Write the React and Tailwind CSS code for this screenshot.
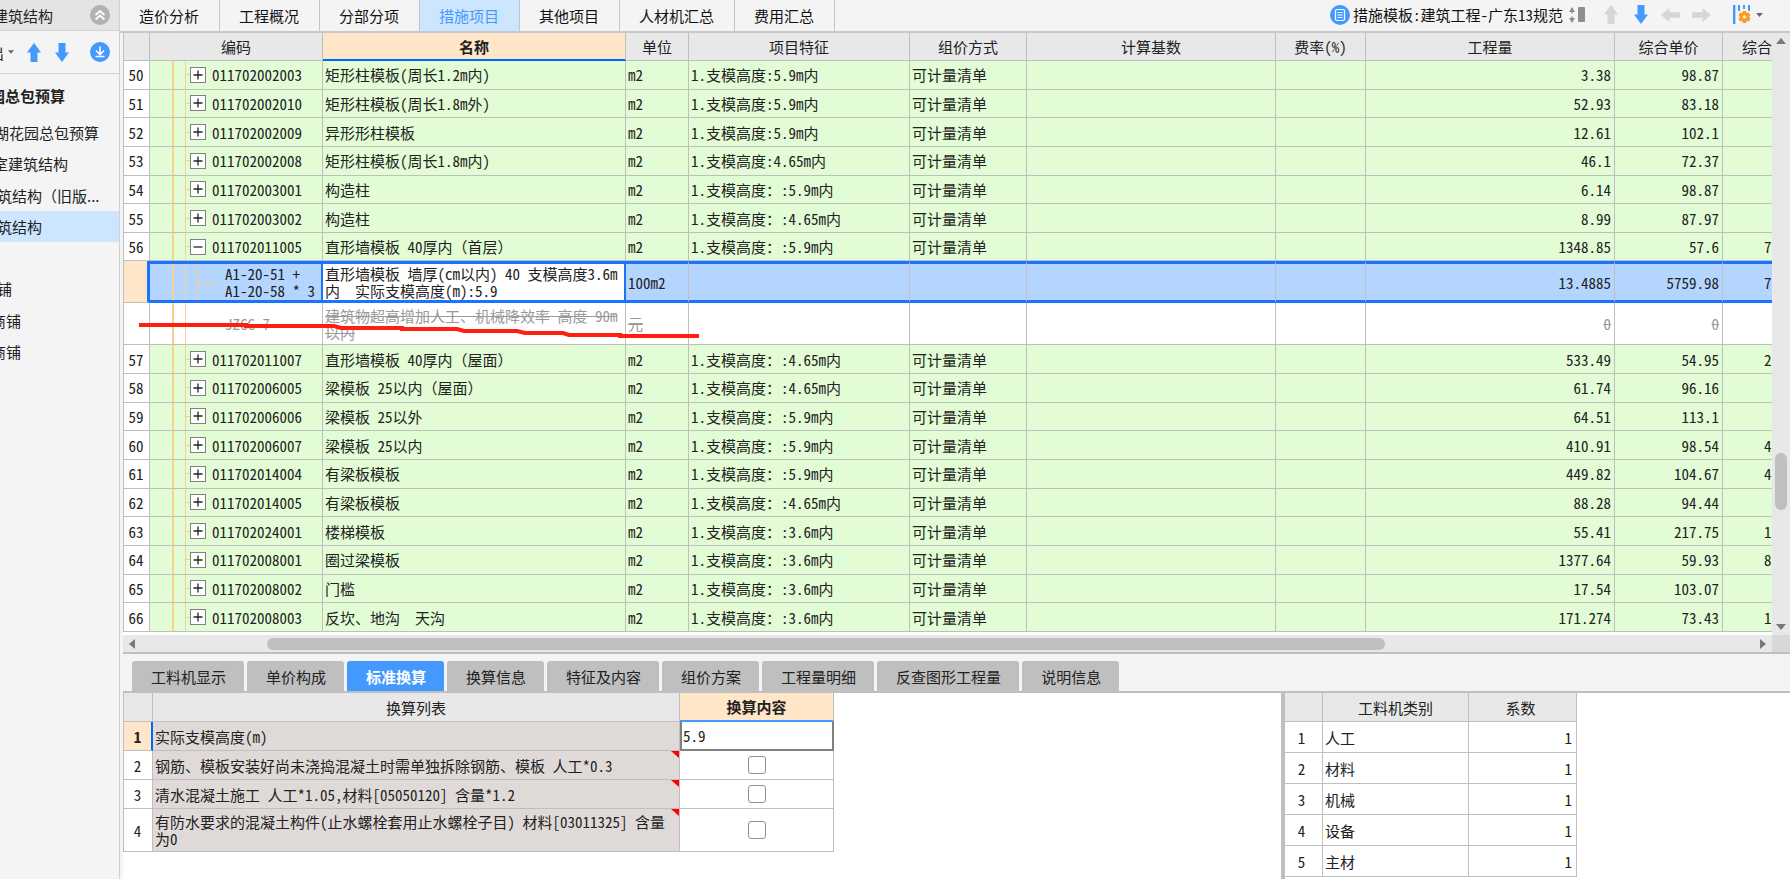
import React from "react";

const GROUP = "可计量清单";

const rows = [
  { no: 50, code: "011702002003", name: "矩形柱模板(周长1.2m内)", feature: "1.支模高度:5.9m内", qty: "3.38", price: "98.87", total: "" },
  { no: 51, code: "011702002010", name: "矩形柱模板(周长1.8m外)", feature: "1.支模高度:5.9m内", qty: "52.93", price: "83.18", total: "" },
  { no: 52, code: "011702002009", name: "异形形柱模板", feature: "1.支模高度:5.9m内", qty: "12.61", price: "102.1", total: "" },
  { no: 53, code: "011702002008", name: "矩形柱模板(周长1.8m内)", feature: "1.支模高度:4.65m内", qty: "46.1", price: "72.37", total: "" },
  { no: 54, code: "011702003001", name: "构造柱", feature: "1.支模高度：:5.9m内", qty: "6.14", price: "98.87", total: "" },
  { no: 55, code: "011702003002", name: "构造柱", feature: "1.支模高度：:4.65m内", qty: "8.99", price: "87.97", total: "" },
  { no: 56, code: "011702011005", name: "直形墙模板 40厚内（首层）", feature: "1.支模高度：:5.9m内", qty: "1348.85", price: "57.6", total: "7", open: true },
  { kind: "selected", code: "A1-20-51 +\nA1-20-58 * 3", name: "直形墙模板 墙厚(cm以内) 40 支模高度3.6m\n内  实际支模高度(m):5.9", unit: "100m2", qty: "13.4885", price: "5759.98", total: "7" },
  { kind: "removed", code: "JZCG-7", name: "建筑物超高增加人工、机械降效率 高度 90m\n以内", unit: "元", qty: "0", price: "0", total: "" },
  { no: 57, code: "011702011007", name: "直形墙模板 40厚内（屋面）", feature: "1.支模高度：:4.65m内", qty: "533.49", price: "54.95", total: "2" },
  { no: 58, code: "011702006005", name: "梁模板 25以内（屋面）", feature: "1.支模高度：:4.65m内", qty: "61.74", price: "96.16", total: "" },
  { no: 59, code: "011702006006", name: "梁模板 25以外", feature: "1.支模高度：:5.9m内", qty: "64.51", price: "113.1", total: "" },
  { no: 60, code: "011702006007", name: "梁模板 25以内", feature: "1.支模高度：:5.9m内", qty: "410.91", price: "98.54", total: "4" },
  { no: 61, code: "011702014004", name: "有梁板模板", feature: "1.支模高度：:5.9m内", qty: "449.82", price: "104.67", total: "4" },
  { no: 62, code: "011702014005", name: "有梁板模板", feature: "1.支模高度：:4.65m内", qty: "88.28", price: "94.44", total: "" },
  { no: 63, code: "011702024001", name: "楼梯模板", feature: "1.支模高度：:3.6m内", qty: "55.41", price: "217.75", total: "1" },
  { no: 64, code: "011702008001", name: "圈过梁模板", feature: "1.支模高度：:3.6m内", qty: "1377.64", price: "59.93", total: "8" },
  { no: 65, code: "011702008002", name: "门槛", feature: "1.支模高度：:3.6m内", qty: "17.54", price: "103.07", total: "" },
  { no: 66, code: "011702008003", name: "反坎、地沟　天沟", feature: "1.支模高度：:3.6m内", qty: "171.274", price: "73.43", total: "1" },
];

const topTabs = ["造价分析", "工程概况", "分部分项", "措施项目", "其他项目", "人材机汇总", "费用汇总"];
const detailTabs = ["工料机显示", "单价构成", "标准换算", "换算信息", "特征及内容", "组价方案", "工程量明细", "反查图形工程量", "说明信息"];

const projectTree = [
  { text: "湖花园总包预算", shift: "-ml-[6px]" },
  { text: "室建筑结构", shift: "-ml-[7px]" },
  { text: "筑结构（旧版...", shift: "-ml-[3px]" },
  { text: "筑结构", shift: "-ml-[3px]", active: true },
  { text: "", shift: "" },
  { text: "铺", shift: "-ml-[3px]" },
  { text: "商铺", shift: "-ml-[9px]" },
  { text: "商铺", shift: "-ml-[9px]" },
];

const conversions = [
  { no: 2, text: "钢筋、模板安装好尚未浇捣混凝土时需单独拆除钢筋、模板 人工*0.3", h: "h-[29px]" },
  { no: 3, text: "清水混凝土施工 人工*1.05,材料[05050120] 含量*1.2", h: "h-[29px]" },
  { no: 4, text: "有防水要求的混凝土构件(止水螺栓套用止水螺栓子目) 材料[03011325] 含量为0", h: "h-[43px]" },
];

const factors = ["人工", "材料", "机械", "设备", "主材"];

// Latin text is set half-width; full-width brackets and spaces keep their full em.
function Mixed({ text }) {
  return text.split(/([（）　])/).map((part, i) =>
    i % 2 ? (
      <span key={i} className="[font-feature-settings:normal]">
        {part}
      </span>
    ) : (
      part
    )
  );
}

function FatArrow({ className }) {
  return (
    <svg viewBox="0 0 14 19" className={className} fill="currentColor" aria-hidden="true">
      <path d="M7 0 L14 9.5 H10.5 V19 H3.5 V9.5 H0 Z" />
    </svg>
  );
}

function ThinArrow({ className }) {
  return (
    <svg viewBox="0 0 19 14" className={className} fill="currentColor" aria-hidden="true">
      <path d="M0 7 L8.5 0 V4.2 H19 V9.8 H8.5 V14 Z" />
    </svg>
  );
}

function Triangle({ className }) {
  return (
    <svg viewBox="0 0 10 6" className={className} fill="currentColor" aria-hidden="true">
      <path d="M0 0 H10 L5 6 Z" />
    </svg>
  );
}

function ExpandBox({ open }) {
  return (
    <button type="button" aria-label={open ? "收起" : "展开"} className="size-4 shrink-0 border border-[#808080] bg-white">
      <svg viewBox="0 0 14 14" className="block size-full" stroke="#222" strokeWidth="1.3" aria-hidden="true">
        <path d={open ? "M2.5 7 H11.5" : "M2.5 7 H11.5 M7 2.5 V11.5"} />
      </svg>
    </button>
  );
}

function Sidebar() {
  return (
    <aside className="flex w-[120px] shrink-0 flex-col overflow-hidden border-r border-[#d0d0d0] [font-feature-settings:normal]">
      <div className="flex h-[31px] items-center justify-between border-b border-[#d4d4d4] bg-[#e4e4e4] pr-[9px]">
        <span className="-ml-[7px] whitespace-nowrap">建筑结构</span>
        <button type="button" aria-label="折叠">
          <svg viewBox="0 0 20 20" className="block size-5" aria-hidden="true">
            <circle cx="10" cy="10" r="10" fill="#b2b2b2" />
            <path d="M5.5 10 L10 6 L14.5 10 M5.5 14.5 L10 10.5 L14.5 14.5" fill="none" stroke="#fff" strokeWidth="1.8" />
          </svg>
        </button>
      </div>
      <div className="flex h-[43px] items-center border-b border-[#d4d4d4] pr-[9px]">
        <button type="button" className="-ml-[11px] flex items-center gap-1 whitespace-nowrap">
          出
          <Triangle className="h-1 w-[6px] text-[#666]" />
        </button>
        <button type="button" aria-label="上移" className="ml-[13px]">
          <FatArrow className="block h-[19px] w-[14px] text-[#4499ff]" />
        </button>
        <button type="button" aria-label="下移" className="ml-[14px]">
          <FatArrow className="block h-[19px] w-[14px] rotate-180 text-[#4499ff]" />
        </button>
        <button type="button" aria-label="下载" className="ml-auto">
          <svg viewBox="0 0 20 20" className="block size-5" aria-hidden="true">
            <circle cx="10" cy="10" r="10" fill="#4499ff" />
            <path d="M10 4.5 V12 M6 8.5 L10 12.5 L14 8.5 M5.5 14.5 H14.5" fill="none" stroke="#fff" strokeWidth="1.6" />
          </svg>
        </button>
      </div>
      <div className="flex h-[43px] items-center">
        <span className="-ml-[10px] whitespace-nowrap font-bold">园总包预算</span>
      </div>
      <ul className="grid h-[250px] grid-rows-8">
        {projectTree.map((item, i) => (
          <li key={i} className={item.active ? "flex items-center bg-[#cce6ff]" : "flex items-center"}>
            {item.text && (
              <a href="#project" className={"whitespace-nowrap " + item.shift}>
                {item.text}
              </a>
            )}
          </li>
        ))}
      </ul>
    </aside>
  );
}

function TopBar() {
  return (
    <div className="flex h-[33px] items-stretch justify-between border-b-2 border-[#c8c8c8]">
      <nav className="flex">
        {topTabs.map((t) => (
          <button
            key={t}
            type="button"
            className={
              "flex items-center border-r border-[#c4c4c4] pr-5 pl-[19px] " +
              (t === "措施项目" ? "bg-[#cce6ff] text-[#4499ff]" : "text-[#111]")
            }
          >
            {t}
          </button>
        ))}
      </nav>
      <div className="flex items-center pr-[27px] pb-[2px] text-[#111]">
        <button type="button" className="flex items-center gap-[3px] whitespace-nowrap">
          <svg viewBox="0 0 20 20" className="size-5" aria-hidden="true">
            <circle cx="10" cy="10" r="10" fill="#4499ff" />
            <rect x="5.5" y="4.5" width="9" height="11" rx="1.5" fill="none" stroke="#fff" strokeWidth="1.2" />
            <path d="M7.5 7.5 H12.5 M7.5 10 H12.5 M7.5 12.5 H12.5" stroke="#fff" strokeWidth="1.1" />
          </svg>
          措施模板:建筑工程-广东13规范
        </button>
        <svg viewBox="0 0 16 16" className="ml-[6px] size-4" fill="#8e8e8e" aria-hidden="true">
          <path d="M0 5 L3 0 L6 5 Z M0 11 H6 L3 16 Z" />
          <path d="M2.3 5 H3.7 V6.5 H2.3 Z M2.3 9.5 H3.7 V11 H2.3 Z" />
          <rect x="9" y="0" width="7" height="15" rx="1" />
        </svg>
        <button type="button" aria-label="上移" className="ml-[19px]">
          <FatArrow className="block h-[19px] w-[14px] text-[#d6d6d6]" />
        </button>
        <button type="button" aria-label="下移" className="ml-4">
          <FatArrow className="block h-[19px] w-[14px] rotate-180 text-[#4499ff]" />
        </button>
        <button type="button" aria-label="左移" className="ml-[13px]">
          <ThinArrow className="block h-[14px] w-[19px] text-[#d6d6d6]" />
        </button>
        <button type="button" aria-label="右移" className="ml-3">
          <ThinArrow className="block h-[14px] w-[19px] rotate-180 text-[#d6d6d6]" />
        </button>
        <button type="button" aria-label="设置列" className="ml-[22px] flex items-center gap-[5px]">
          <svg viewBox="0 0 18 19" className="h-[19px] w-[18px]" aria-hidden="true">
            <g fill="#4499ff">
              <rect x="0" y="0" width="2.4" height="19" />
              <rect x="5" y="0" width="2" height="6" />
              <rect x="10" y="0" width="2" height="4" />
              <rect x="15" y="0" width="2" height="6" />
            </g>
            <g fill="#ff9a1f">
              <circle cx="11.5" cy="12" r="4.8" />
              <rect x="9.5" y="6" width="4" height="12" rx="1" />
              <rect x="9.5" y="6" width="4" height="12" rx="1" transform="rotate(60 11.5 12)" />
              <rect x="9.5" y="6" width="4" height="12" rx="1" transform="rotate(120 11.5 12)" />
            </g>
            <circle cx="11.5" cy="12" r="1.8" fill="#f4f4f4" />
          </svg>
          <Triangle className="h-1 w-[7px] text-[#666]" />
        </button>
      </div>
    </div>
  );
}

const TREE = "bg-[linear-gradient(90deg,transparent_22px,#fbd08f_22px,#fbd08f_24px,transparent_24px,transparent_35px,#fbd08f_35px,#fbd08f_36px,transparent_36px)]";
const TREE3 = "bg-[linear-gradient(90deg,transparent_22px,#fbd08f_22px,#fbd08f_24px,transparent_24px,transparent_35px,#fbd08f_35px,#fbd08f_36px,transparent_36px,transparent_47px,#fbd08f_47px,#fbd08f_48px,transparent_48px)]";

function ItemRow({ r }) {
  const c = "border-r border-b border-[#bfbfbf] ";
  return (
    <tr className="h-7 bg-[#e2fdd6]">
      <td className={c + "bg-white pr-px text-center"}>{r.no}</td>
      <td className={c + TREE}>
        <div className="flex items-center pl-9">
          <span className="h-px w-1 bg-[#fbd08f]" />
          <ExpandBox open={r.open} />
          <span className="pl-[6px]">{r.code}</span>
        </div>
      </td>
      <td className={c + "pl-[2px] whitespace-nowrap"}>
        <Mixed text={r.name} />
      </td>
      <td className={c + "pl-[2px]"}>m2</td>
      <td className={c + "pl-[2px] whitespace-nowrap"}>{r.feature}</td>
      <td className={c + "pl-[2px]"}>{GROUP}</td>
      <td className={c} />
      <td className={c} />
      <td className={c + "pr-[3px] text-right"}>{r.qty}</td>
      <td className={c + "pr-[3px] text-right"}>{r.price}</td>
      <td className="overflow-hidden border-b border-[#bfbfbf] pl-[41px]">{r.total}</td>
    </tr>
  );
}

function SelectedRow({ r }) {
  const c = "border-y-[3px] border-r border-y-[#1a73ff] border-r-[#bfbfbf] ";
  return (
    <tr className="h-[41px] bg-[#b3d5ff]">
      <td className="border-r-[3px] border-b border-r-[#1a73ff] border-b-[#bfbfbf] bg-[#ffe6c9]" />
      <td className={"border-y-[3px] border-r-2 border-[#1a73ff] " + TREE3}>
        <div className="flex items-center pl-12">
          <span className="h-px w-5 bg-[#fbd08f]" />
          <span className="pl-[7px] whitespace-pre">{r.code}</span>
        </div>
      </td>
      <td className="border-y-[3px] border-r-2 border-[#1a73ff] bg-white pl-[2px] whitespace-pre">{r.name}</td>
      <td className={c + "pl-[2px]"}>{r.unit}</td>
      <td className={c} />
      <td className={c} />
      <td className={c} />
      <td className={c} />
      <td className={c + "pr-[3px] text-right"}>{r.qty}</td>
      <td className={c + "pr-[3px] text-right"}>{r.price}</td>
      <td className="overflow-hidden border-y-[3px] border-[#1a73ff] pl-[41px]">{r.total}</td>
    </tr>
  );
}

function RemovedRow({ r }) {
  const c = "border-r border-b border-[#bfbfbf] ";
  return (
    <tr className="h-[41px] bg-white text-[#9a9a9a]">
      <td className={c} />
      <td className={c + TREE}>
        <div className="pl-[75px] line-through">{r.code}</div>
      </td>
      <td className={c + "pl-[2px] whitespace-pre line-through"}>{r.name}</td>
      <td className={c + "pl-[2px] line-through"}>{r.unit}</td>
      <td className={c} />
      <td className={c} />
      <td className={c} />
      <td className={c} />
      <td className={c + "pr-[3px] text-right line-through"}>{r.qty}</td>
      <td className={c + "pr-[3px] text-right line-through"}>{r.price}</td>
      <td className="border-b border-[#bfbfbf]" />
    </tr>
  );
}

function ItemTable() {
  const h = "border-r border-b border-[#bfbfbf] font-normal ";
  return (
    <div className="relative min-w-0 flex-1 overflow-hidden bg-white pb-[3px]">
      <table className="h-[599px] w-full table-fixed border-separate border-spacing-0 border-l border-[#bfbfbf]">
        <colgroup>
          <col className="w-[26px]" />
          <col className="w-[173px]" />
          <col className="w-[303px]" />
          <col className="w-[63px]" />
          <col className="w-[221px]" />
          <col className="w-[117px]" />
          <col />
          <col className="w-[90px]" />
          <col className="w-[249px]" />
          <col className="w-[108px]" />
          <col className="w-[49px]" />
        </colgroup>
        <thead>
          <tr className="h-7 bg-[#e8e8e8]">
            <th className={h} aria-label="序号" />
            <th className={h}>编码</th>
            <th className="border-r border-b-2 border-r-[#bfbfbf] border-b-[#0066ff] bg-[#ffe6c9] font-bold">名称</th>
            <th className={h}>单位</th>
            <th className={h}>项目特征</th>
            <th className={h}>组价方式</th>
            <th className={h}>计算基数</th>
            <th className={h}>费率(%)</th>
            <th className={h}>工程量</th>
            <th className={h}>综合单价</th>
            <th className="overflow-hidden border-b border-[#bfbfbf] pl-[19px] text-left font-normal">综合</th>
          </tr>
        </thead>
        <tbody>
          {rows.map((r) =>
            r.kind === "selected" ? (
              <SelectedRow key={r.code} r={r} />
            ) : r.kind === "removed" ? (
              <RemovedRow key={r.code} r={r} />
            ) : (
              <ItemRow key={r.code} r={r} />
            )
          )}
        </tbody>
      </table>
      <svg viewBox="0 0 564 20" className="absolute top-[286px] left-4 h-5 w-[564px]" fill="none" stroke="#ff1e0f" strokeWidth="4" aria-hidden="true">
        <path d="M0 6 H107 V7 H195 L202 9 H263 V10 H318 L325 12 H378 L386 14 H424 L430 16 H481 V17 H560" />
      </svg>
    </div>
  );
}

function ConversionTable() {
  return (
    <table className="table-fixed self-start border-separate border-spacing-0 border-l border-[#bfbfbf]">
      <colgroup>
        <col className="w-[29px]" />
        <col className="w-[527px]" />
        <col className="w-[154px]" />
      </colgroup>
      <thead>
        <tr className="h-[29px] bg-[#e8e8e8]">
          <th className="border-r border-b border-[#bfbfbf]" aria-label="序号" />
          <th className="border-r border-b border-[#bfbfbf] font-normal">换算列表</th>
          <th className="border-r border-b-2 border-r-[#bfbfbf] border-b-[#4499ff] bg-[#ffe6c9] font-bold">换算内容</th>
        </tr>
      </thead>
      <tbody>
        <tr className="h-[29px]">
          <td className="border-r-2 border-b border-r-[#0066ff] border-b-[#bfbfbf] bg-[#ffe6c9] text-center font-bold">1</td>
          <td className="border-r border-b border-[#bfbfbf] bg-[#dfdad8] pl-[2px]">
            <label htmlFor="height">实际支模高度(m)</label>
          </td>
          <td className="bg-white">
            <input id="height" defaultValue="5.9" className="block h-[29px] w-full border-2 border-t-0 border-[#808080] bg-white pl-px outline-none" />
          </td>
        </tr>
        {conversions.map((c) => (
          <tr key={c.no} className={c.h}>
            <td className="border-r border-b border-[#bfbfbf] bg-white pr-px text-center">{c.no}</td>
            <td className="relative border-r border-b border-[#bfbfbf] bg-[#dfdad8] pr-2 pl-[2px]">
              <label htmlFor={"conversion" + c.no}>{c.text}</label>
              <svg viewBox="0 0 8 7" className="absolute top-0 right-0 h-[7px] w-2" fill="#f00" aria-hidden="true">
                <path d="M0 0 H8 V7 Z" />
              </svg>
            </td>
            <td className="border-r border-b border-[#bfbfbf] bg-white">
              <input id={"conversion" + c.no} type="checkbox" className="mx-auto block size-[18px] appearance-none rounded-[3px] border border-[#8f8f8f] bg-white" />
            </td>
          </tr>
        ))}
      </tbody>
    </table>
  );
}

function FactorTable() {
  return (
    <table className="table-fixed self-start border-separate border-spacing-0">
      <colgroup>
        <col className="w-[38px]" />
        <col className="w-[146px]" />
        <col className="w-[108px]" />
      </colgroup>
      <thead>
        <tr className="h-[29px] bg-[#e8e8e8]">
          <th className="border-r border-b border-[#bfbfbf]" aria-label="序号" />
          <th className="border-r border-b border-[#bfbfbf] font-normal">工料机类别</th>
          <th className="border-r border-b border-[#bfbfbf] pr-1 font-normal">系数</th>
        </tr>
      </thead>
      <tbody>
        {factors.map((f, i) => (
          <tr key={f} className="h-[31px]">
            <td className="border-r border-b border-[#bfbfbf] pr-1 text-center">{i + 1}</td>
            <td className="border-r border-b border-[#bfbfbf] pl-[2px]">{f}</td>
            <td className="border-r border-b border-[#bfbfbf] pr-1 text-right">1</td>
          </tr>
        ))}
      </tbody>
    </table>
  );
}

export default function App() {
  return (
    <div className="flex h-screen overflow-hidden bg-[#f4f4f4] font-['Noto_Sans_CJK_SC',sans-serif] text-[15px] leading-[17px] text-[#222] [font-feature-settings:'hwid']">
      <Sidebar />
      <main className="flex min-w-0 flex-1 flex-col">
        <TopBar />
        <div className="flex min-h-0 flex-1 flex-col pl-[3px]">
          <div className="flex shrink-0">
            <ItemTable />
            <div className="flex w-[18px] flex-col items-center bg-[#e8e8e8] py-[5px] text-[#77777d]">
              <Triangle className="h-[6px] w-[10px] rotate-180" />
              <div className="grow-[408]" />
              <div className="w-3 grow-[56] rounded-full bg-[#bfbfbf]" />
              <div className="grow-[114]" />
              <Triangle className="h-[6px] w-[10px]" />
            </div>
          </div>
          <div className="flex h-[19px] shrink-0 border-b-2 border-[#bfbfbf] bg-[#e8e8e8]">
            <div className="flex min-w-0 flex-1 items-center justify-between px-1 text-[#77777d]">
              <Triangle className="h-[6px] w-[10px] rotate-90" />
              <div className="flex flex-1">
                <div className="ml-[8%] h-3 w-[69%] rounded-full bg-[#bfbfbf]" />
              </div>
              <Triangle className="h-[6px] w-[10px] -rotate-90" />
            </div>
            <div className="w-[18px] bg-[#d8d8d8]" />
          </div>
          <nav className="flex shrink-0 gap-[3px] border-b-2 border-[#bfbfbf] pt-[7px] pl-[9px]">
            {detailTabs.map((t) => (
              <button
                key={t}
                type="button"
                className={
                  "flex h-[30px] items-center rounded-t-[3px] pr-[18px] pl-[19px] whitespace-nowrap " +
                  (t === "标准换算" ? "bg-[#4499ff] font-bold text-white" : "bg-[#bfbfbf]")
                }
              >
                {t}
              </button>
            ))}
          </nav>
          <div className="flex min-h-0 flex-1 overflow-hidden bg-white">
            <section className="flex flex-1">
              <ConversionTable />
            </section>
            <section className="flex w-[509px] border-l-4 border-[#bfbfbf]">
              <FactorTable />
            </section>
          </div>
        </div>
      </main>
    </div>
  );
}
